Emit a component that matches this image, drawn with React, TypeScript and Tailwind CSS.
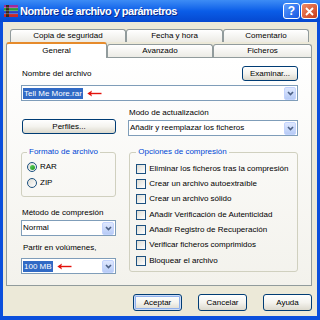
import React from 'react';
import clsx from 'clsx';

// flecha roja pintada a mano sobre la captura
const RedArrow = () => (
  <svg width="15" height="7" viewBox="0 0 15 7" className="shrink-0">
    <path d="M2 3.5 H14.5" stroke="#e3120b" strokeWidth="1.4" />
    <path d="M0.3 3.5 L5 0.6 L4 3.5 L5 6.4 Z" fill="#e3120b" />
  </svg>
);

const DropBtn = () => (
  <div className="w-[12px] h-[13px] mr-[1px] shrink-0 rounded-[2px] border border-[#c3d3fd] bg-gradient-to-b from-[#dfe8fe] to-[#b7cbf6] flex items-center justify-center">
    <svg width="7" height="5" viewBox="0 0 7 5">
      <path d="M1 1 L3.5 3.6 L6 1" stroke="#4d6185" strokeWidth="1.6" fill="none" />
    </svg>
  </div>
);

function Combo({ children, className }: { children: React.ReactNode; className?: string }) {
  return (
    <div className={clsx('flex items-center h-[16px] bg-white border border-[#7f9db9]', className)}>
      <div className="flex-1 flex items-center gap-[4px] pl-[1px] min-w-0 whitespace-nowrap">{children}</div>
      <DropBtn />
    </div>
  );
}

const Selected = ({ children }: { children: React.ReactNode }) => (
  <span className="bg-[#316ac5] text-white px-[1px] leading-[11px]">{children}</span>
);

function XpButton({ children, className, isDefault }: { children: React.ReactNode; className?: string; isDefault?: boolean }) {
  return (
    <button
      type="button"
      className={clsx(
        'flex items-center justify-center border border-[#003c74] rounded-[3px] bg-gradient-to-b from-white via-[#f4f3ee] to-[#dcd9cd] text-black',
        isDefault && 'shadow-[inset_0_0_0_1px_#cddcf7,inset_0_0_0_2px_#8fb0ec]',
        className
      )}
    >
      {children}
    </button>
  );
}

const Radio = ({ checked, label }: { checked?: boolean; label: string }) => (
  <div className="flex items-center h-[16px]">
    <div className="w-[10px] h-[10px] rounded-full border border-[#1c5180] bg-gradient-to-br from-[#dcdcd5] to-white flex items-center justify-center">
      {checked && <div className="w-[5px] h-[5px] rounded-full bg-gradient-to-br from-[#5ed55e] to-[#1a961a]" />}
    </div>
    <span className="ml-[3px]">{label}</span>
  </div>
);

const Check = ({ label }: { label: string }) => (
  <div className="flex items-center h-[15.33px]">
    <div className="w-[10px] h-[10px] shrink-0 border border-[#1c5180] bg-gradient-to-br from-[#dcdcd5] to-white" />
    <span className="ml-[3px] whitespace-nowrap">{label}</span>
  </div>
);

const Tab = ({ children, className }: { children: React.ReactNode; className?: string }) => (
  <div
    className={clsx(
      'flex items-center justify-center border border-b-0 border-[#919b9c] rounded-t-[3px] bg-gradient-to-b from-white to-[#ecebe5]',
      className
    )}
  >
    {children}
  </div>
);

const WinRarIcon = () => (
  <svg width="14" height="12" viewBox="0 0 14 12" className="shrink-0">
    <rect x="0" y="0" width="14" height="3" fill="#a02a9a" />
    <rect x="0" y="3" width="14" height="3" fill="#2a9a3a" />
    <rect x="0" y="6" width="14" height="3" fill="#2944c4" />
    <rect x="0" y="9" width="14" height="3" fill="#c62a2a" />
    <rect x="2" y="0" width="3" height="12" fill="#3a2a1a" />
    <rect x="0" y="2.5" width="14" height="0.6" fill="#fff" opacity="0.5" />
    <rect x="0" y="5.5" width="14" height="0.6" fill="#fff" opacity="0.5" />
    <rect x="0" y="8.5" width="14" height="0.6" fill="#fff" opacity="0.5" />
  </svg>
);

export default function App() {
  return (
    <div className="w-[320px] h-[320px] flex flex-col overflow-hidden bg-[#0b4fdc] font-['Liberation_Sans',Arial,sans-serif] text-[8px] text-black">
      {/* barra de título */}
      <div className="h-[22px] shrink-0 flex items-center pl-[4px] pr-[2px] bg-gradient-to-b from-[#3d8cf5] via-[#0a5de8] to-[#0648d0]">
        <WinRarIcon />
        <span className="ml-[2px] text-white font-bold text-[11px] tracking-[-0.5px] [text-shadow:1px_1px_0_#0a2a8a]">
          Nombre de archivo y parámetros
        </span>
        <div className="ml-auto flex gap-[1px]">
          <div className="w-[17px] h-[16px] rounded-[3px] border border-white bg-gradient-to-br from-[#5a9bff] to-[#1656e0] flex items-center justify-center text-white font-bold text-[12px] leading-none">
            ?
          </div>
          <div className="w-[17px] h-[16px] rounded-[3px] border border-white bg-gradient-to-br from-[#f08a66] to-[#c83a14] flex items-center justify-center">
            <svg width="9" height="9" viewBox="0 0 9 9">
              <path d="M1 1 L8 8 M8 1 L1 8" stroke="#fff" strokeWidth="1.8" />
            </svg>
          </div>
        </div>
      </div>

      {/* cuerpo */}
      <div className="flex-1 mx-[3px] mb-[4px] bg-[#ece9d8] flex flex-col">
        {/* pestañas */}
        <div className="mt-[7px] h-[13px] flex pl-[7px]">
          <Tab className="w-[116px]">Copia de seguridad</Tab>
          <Tab className="w-[97px]">Fecha y hora</Tab>
          <Tab className="w-[86px]">Comentario</Tab>
        </div>
        <div className="h-[15px] flex items-end pl-[3px] relative z-10">
          <div className="w-[101px] h-[16px] mb-[-1px] border border-b-0 border-[#919b9c] border-t-[2px] border-t-[#e68b2c] rounded-t-[3px] bg-white flex items-center justify-center">
            General
          </div>
          <Tab className="w-[106px] h-[13px]">Avanzado</Tab>
          <Tab className="w-[99px] h-[13px]">Ficheros</Tab>
        </div>

        {/* panel */}
        <div className="ml-[3px] w-[306px] h-[229px] border border-[#919b9c] bg-gradient-to-b from-white to-[#f3f2ec] pl-[14px] pr-[13px] pt-[8px] flex flex-col">
          <div className="h-[15px] flex items-end justify-between">
            <span className="ml-[1px] mb-[1px]">Nombre del archivo</span>
            <XpButton className="w-[56px] h-[15px]">Examinar...</XpButton>
          </div>
          <Combo className="mt-[4px]">
            <Selected>Tell Me More.rar</Selected>
            <RedArrow />
          </Combo>

          <div className="mt-[6px] flex">
            <div className="w-[96px] pt-[12px]">
              <XpButton className="ml-[1px] w-[94px] h-[15px]">Perfiles...</XpButton>
            </div>
            <div className="ml-[11px] flex-1 flex flex-col">
              <span className="h-[10px] ml-[1px]">Modo de actualización</span>
              <Combo className="mt-[3px]">
                <span>Añadir y reemplazar los ficheros</span>
              </Combo>
            </div>
          </div>

          <div className="mt-[11px] flex">
            <div className="w-[96px] flex flex-col">
              <fieldset className="h-[50px] border border-[#d0d0bf] rounded-[3px] pl-[5px]">
                <legend className="px-[2px] text-[#0046d5] leading-[10px]">Formato de archivo</legend>
                <div className="mt-[2px] flex flex-col">
                  <Radio checked label="RAR" />
                  <Radio label="ZIP" />
                </div>
              </fieldset>
              <span className="mt-[10px] ml-[1px] h-[10px]">Método de compresión</span>
              <Combo className="mt-[3px] h-[15px]">
                <span>Normal</span>
              </Combo>
              <span className="mt-[6px] ml-[2px] h-[10px]">Partir en volúmenes,</span>
              <Combo className="mt-[6px]">
                <Selected>100 MB</Selected>
                <RedArrow />
              </Combo>
            </div>
            <fieldset className="ml-[13px] w-[170px] h-[125px] border border-[#d0d0bf] rounded-[3px] pl-[6px]">
              <legend className="px-[2px] text-[#0046d5] leading-[10px]">Opciones de compresión</legend>
              <div className="mt-[4px] flex flex-col">
                <Check label="Eliminar los ficheros tras la compresión" />
                <Check label="Crear un archivo autoextraíble" />
                <Check label="Crear un archivo sólido" />
                <Check label="Añadir Verificación de Autenticidad" />
                <Check label="Añadir Registro de Recuperación" />
                <Check label="Verificar ficheros comprimidos" />
                <Check label="Bloquear el archivo" />
              </div>
            </fieldset>
          </div>
        </div>

        {/* botones */}
        <div className="mt-[8px] flex justify-end gap-[16px] pr-[5px]">
          <XpButton isDefault className="w-[49px] h-[17px]">Aceptar</XpButton>
          <XpButton className="w-[49px] h-[17px]">Cancelar</XpButton>
          <XpButton className="w-[49px] h-[17px]">Ayuda</XpButton>
        </div>
      </div>
    </div>
  );
}
